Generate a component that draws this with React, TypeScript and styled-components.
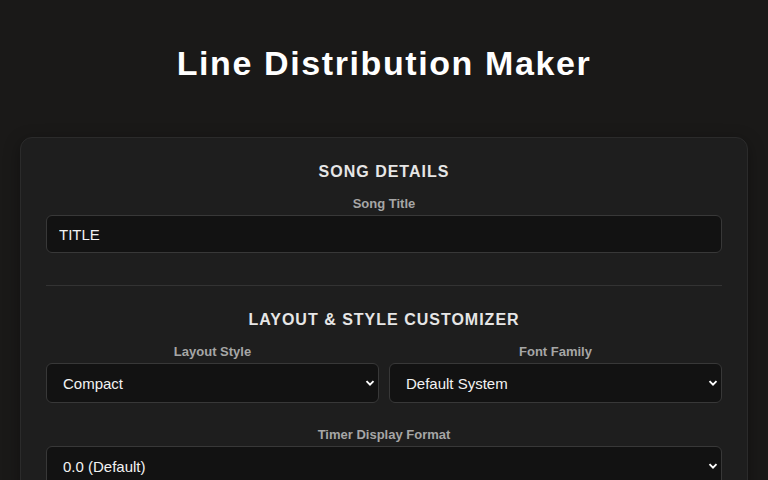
import React from 'react';
import styled, { createGlobalStyle } from 'styled-components';

const GlobalStyle = createGlobalStyle`
  html, body {
    margin: 0;
    padding: 0;
    background: #1a1918;
    font-family: "Liberation Sans", Arial, sans-serif;
    color: #e8e8e8;
  }
  * { box-sizing: border-box; }
`;

const Page = styled.div`
  padding: 0 20px;
  min-height: 100vh;
`;

const Title = styled.h1`
  margin: 0;
  padding: 43px 0 54px;
  text-align: center;
  font-size: 34px;
  line-height: 40px;
  font-weight: 700;
  letter-spacing: 1.6px;
  color: #ffffff;
`;

const Card = styled.div`
  background: #1e1e1e;
  border: 1px solid #2b2b2b;
  border-radius: 12px;
  padding: 24px 25px;
  box-shadow: 0 4px 16px rgba(0, 0, 0, 0.35);
`;

const Section = styled.section`
  & + & {
    margin-top: 32px;
    padding-top: 24px;
    border-top: 1px solid #333;
  }
`;

const SectionTitle = styled.h2`
  margin: 0 0 14px;
  text-align: center;
  font-size: 16px;
  line-height: 20px;
  font-weight: 700;
  letter-spacing: 1px;
  color: #e6e6e6;
`;

const Row = styled.div`
  display: grid;
  grid-template-columns: 1fr 1fr;
  gap: 10px;
  margin-bottom: 24px;
`;

const Field = styled.div`
  display: flex;
  flex-direction: column;
`;

const Label = styled.label`
  text-align: center;
  font-size: 13px;
  line-height: 15px;
  font-weight: 700;
  color: #a6a6a6;
  margin-bottom: 4px;
`;

const TextInput = styled.input`
  height: 38px;
  background: #121212;
  border: 1px solid #383838;
  border-radius: 6px;
  padding: 0 12px;
  font-family: "Liberation Sans", Arial, sans-serif;
  font-size: 15px;
  color: #f2f2f2;
  outline: none;
`;

const SelectWrap = styled.div`
  position: relative;
  height: 40px;
`;

const Select = styled.select`
  appearance: none;
  width: 100%;
  height: 100%;
  background: #121212;
  border: 1px solid #383838;
  border-radius: 6px;
  padding: 0 30px 0 16px;
  font-family: "Liberation Sans", Arial, sans-serif;
  font-size: 15px;
  color: #f2f2f2;
  outline: none;
`;

const Chevron = styled.svg`
  position: absolute;
  right: 4px;
  top: 50%;
  width: 10px;
  height: 10px;
  transform: translateY(-50%);
  pointer-events: none;
`;

const Dropdown = ({ value, options }: { value: string; options: string[] }) => (
  <SelectWrap>
    <Select defaultValue={value}>
      {options.map((o) => (
        <option key={o}>{o}</option>
      ))}
    </Select>
    <Chevron viewBox="0 0 10 10">
      <path d="M1.5 3.2 L5 6.7 L8.5 3.2" fill="none" stroke="#ffffff" strokeWidth="1.9" />
    </Chevron>
  </SelectWrap>
);

export default function App() {
  return (
    <>
      <GlobalStyle />
      <Page>
        <Title>Line Distribution Maker</Title>
        <Card>
          <Section>
            <SectionTitle>SONG DETAILS</SectionTitle>
            <Field>
              <Label>Song Title</Label>
              <TextInput defaultValue="TITLE" />
            </Field>
          </Section>
          <Section>
            <SectionTitle>LAYOUT &amp; STYLE CUSTOMIZER</SectionTitle>
            <Row>
              <Field>
                <Label>Layout Style</Label>
                <Dropdown value="Compact" options={['Compact', 'Standard', 'Wide']} />
              </Field>
              <Field>
                <Label>Font Family</Label>
                <Dropdown value="Default System" options={['Default System', 'Serif', 'Monospace']} />
              </Field>
            </Row>
            <Field>
              <Label>Timer Display Format</Label>
              <Dropdown value="0.0 (Default)" options={['0.0 (Default)', '0:00', 'None']} />
            </Field>
          </Section>
        </Card>
      </Page>
    </>
  );
}
